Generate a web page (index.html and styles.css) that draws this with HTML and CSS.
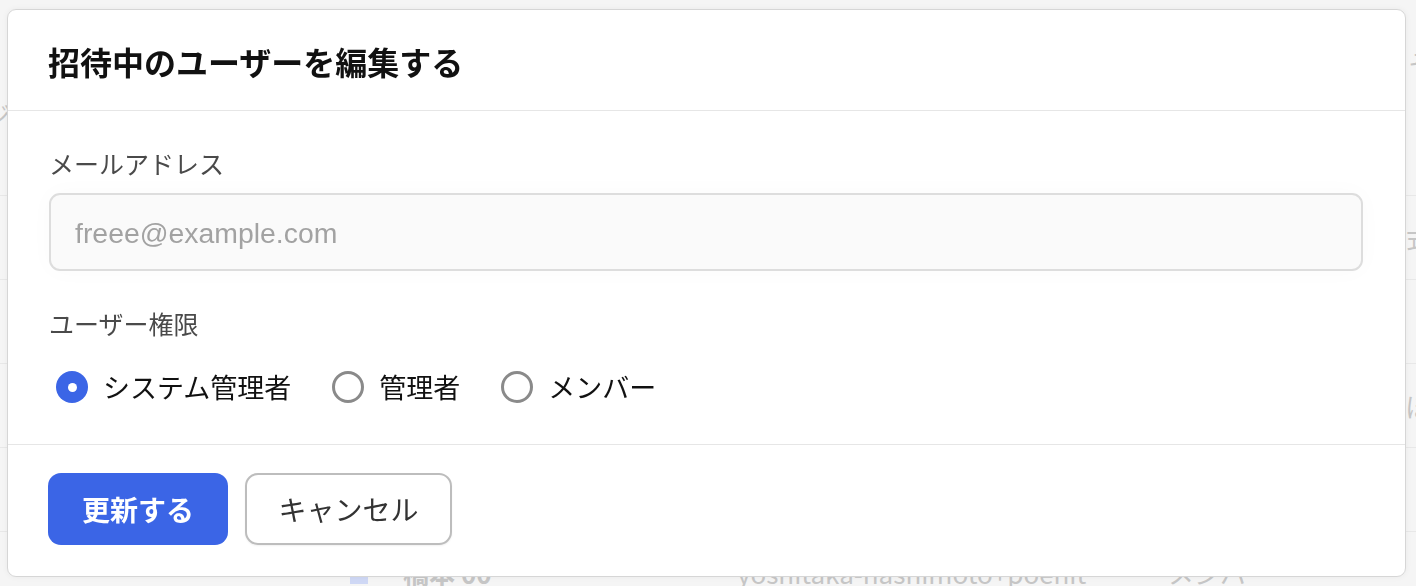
FILE: index.html
```html
<!DOCTYPE html>
<html lang="ja">
<head>
<meta charset="utf-8">
<title>招待中のユーザーを編集する</title>
<link rel="stylesheet" href="styles.css">
</head>
<body>
<div class="bg">
  <div class="bg-head"><span class="bg-side">ジ</span><span class="bg-edge">そ</span></div>
  <div class="bg-row"><span class="c-name"></span><span class="c-mail"></span><span class="c-role"></span><span class="c-edge">式</span></div>
  <div class="bg-row"><span class="c-name"></span><span class="c-mail"></span><span class="c-role"></span><span class="c-edge"></span></div>
  <div class="bg-row"><span class="c-name"></span><span class="c-mail"></span><span class="c-role"></span><span class="c-edge">ぽ</span></div>
  <div class="bg-row"><span class="c-name"></span><span class="c-mail"></span><span class="c-role"></span><span class="c-edge"></span></div>
  <div class="bg-row last"><span class="c-name"><i class="avatar"></i>橋本 00</span><span class="c-mail">yoshitaka-hashimoto+poehit</span><span class="c-role">メンバー</span><span class="c-edge"></span></div>
</div>

<div class="overlay">
  <div class="modal" role="dialog" aria-labelledby="modal-title">
    <div class="modal-header">
      <h2 id="modal-title" class="modal-title">招待中のユーザーを編集する</h2>
    </div>
    <div class="modal-body">
      <label class="field-label" for="email">メールアドレス</label>
      <input id="email" class="text-input" type="email" placeholder="freee@example.com">
      <div class="field-label second">ユーザー権限</div>
      <div class="radio-row">
        <label class="radio-item first"><span class="radio checked"></span><span class="radio-text">システム管理者</span></label>
        <label class="radio-item"><span class="radio"></span><span class="radio-text">管理者</span></label>
        <label class="radio-item"><span class="radio"></span><span class="radio-text">メンバー</span></label>
      </div>
    </div>
    <div class="modal-footer">
      <button class="btn btn-primary" type="button">更新する</button>
      <button class="btn btn-secondary" type="button">キャンセル</button>
    </div>
  </div>
</div>
</body>
</html>
```
FILE: styles.css
```css
html, body {
  margin: 0;
  height: 100%;
}

body {
  font-family: "Noto Sans CJK JP", "Noto Sans", sans-serif;
  background: #f5f5f5;
  overflow: hidden;
  color: #111;
}

/* ---------- background page (behind modal) ---------- */
.bg {
  height: 100%;
  overflow: hidden;
  display: flex;
  flex-direction: column;
  color: #c6c6c6;
  font-size: 26px;
}

.bg-head {
  height: 196px;
  flex: none;
  display: flex;
  justify-content: space-between;
  align-items: flex-start;
  border-bottom: 1px solid #e8e8e8;
  box-sizing: border-box;
}

.bg-side {
  margin-left: -14px;
  margin-top: 96px;
  font-size: 24px;
}

.bg-edge {
  margin-right: -18px;
  margin-top: 44px;
}

.bg-row {
  height: 84px;
  flex: none;
  box-sizing: border-box;
  border-bottom: 1px solid #e8e8e8;
  display: grid;
  grid-template-columns: 340px 397px 431px 236px 1fr;
  align-items: center;
  white-space: nowrap;
}

.bg-row > span:first-child {
  grid-column: 2;
}

.bg-row.last {
  align-items: start;
  padding-top: 22px;
}

.c-name {
  display: flex;
  align-items: center;
  gap: 35px;
  font-weight: bold;
}

.avatar {
  display: inline-block;
  width: 18px;
  height: 22px;
  background: #cfd8f5;
  margin-left: 10px;
}

.c-edge {
  margin-left: 2px;
}

/* ---------- modal ---------- */
.overlay {
  position: fixed;
  inset: 0;
  padding: 9px 10px 9px 7px;
  display: flex;
}

.modal {
  flex: 1;
  display: flex;
  flex-direction: column;
  background: #fff;
  border: 1px solid #d6d6d6;
  border-radius: 9px;
  box-shadow: 0 0 6px rgba(0, 0, 0, 0.05);
}

.modal-header {
  height: 100px;
  padding: 0 40px;
  display: flex;
  align-items: center;
  border-bottom: 1px solid #e6e6e6;
}

.modal-title {
  margin: 0;
  padding-top: 1px;
  font-size: 32px;
  font-weight: bold;
  line-height: 40px;
  color: #111;
}

.modal-body {
  padding: 34px 42px 37px 41px;
  display: flex;
  flex-direction: column;
  border-bottom: 1px solid #e6e6e6;
}

.field-label {
  font-size: 25px;
  line-height: 36px;
  color: #4a4a4a;
  margin-bottom: 12px;
}

.field-label.second {
  margin-top: 34px;
  margin-bottom: 26px;
}

.text-input {
  height: 78px;
  box-sizing: border-box;
  margin: 0;
  padding: 2px 24px 0;
  border: 2px solid #dddddd;
  border-radius: 11px;
  background: #fafafa;
  font-family: "Liberation Sans", "Noto Sans CJK JP", sans-serif;
  font-size: 28.4px;
  color: #222;
  outline: none;
  box-shadow: 0 0 24px rgba(0, 0, 0, 0.025);
}

.text-input::placeholder {
  color: #a2a2a2;
}

.radio-row {
  height: 40px;
  display: flex;
  align-items: center;
  gap: 41px;
}

.radio-item {
  display: flex;
  align-items: center;
  gap: 15px;
}

.radio-item.first {
  margin-left: 7px;
}

.radio {
  width: 32px;
  height: 32px;
  box-sizing: border-box;
  border-radius: 50%;
  border: 3.5px solid #8a8a8a;
  background: #fff;
  position: relative;
}

.radio.checked {
  border: none;
  background: #3b65e6;
}

.radio.checked::after {
  content: "";
  position: absolute;
  left: 50%;
  top: 50%;
  width: 9px;
  height: 9px;
  margin: -4.5px 0 0 -4.5px;
  border-radius: 50%;
  background: #fff;
}

.radio-text {
  font-size: 27px;
  line-height: 40px;
  color: #111;
}

.modal-footer {
  flex: 1;
  padding: 28px 41px 0 40px;
  display: flex;
  align-items: flex-start;
  gap: 17px;
}

.btn {
  height: 72px;
  box-sizing: border-box;
  border-radius: 13px;
  font-family: "Noto Sans CJK JP", "Noto Sans", sans-serif;
  font-size: 28px;
  cursor: pointer;
  padding: 0;
}

.btn-primary {
  width: 180px;
  border: none;
  background: #3b65e6;
  color: #fff;
  font-weight: bold;
}

.btn-secondary {
  width: 207px;
  border: 2px solid #bdbdbd;
  background: #fff;
  color: #333;
  box-shadow: 0 1px 2px rgba(0, 0, 0, 0.06);
}
```
